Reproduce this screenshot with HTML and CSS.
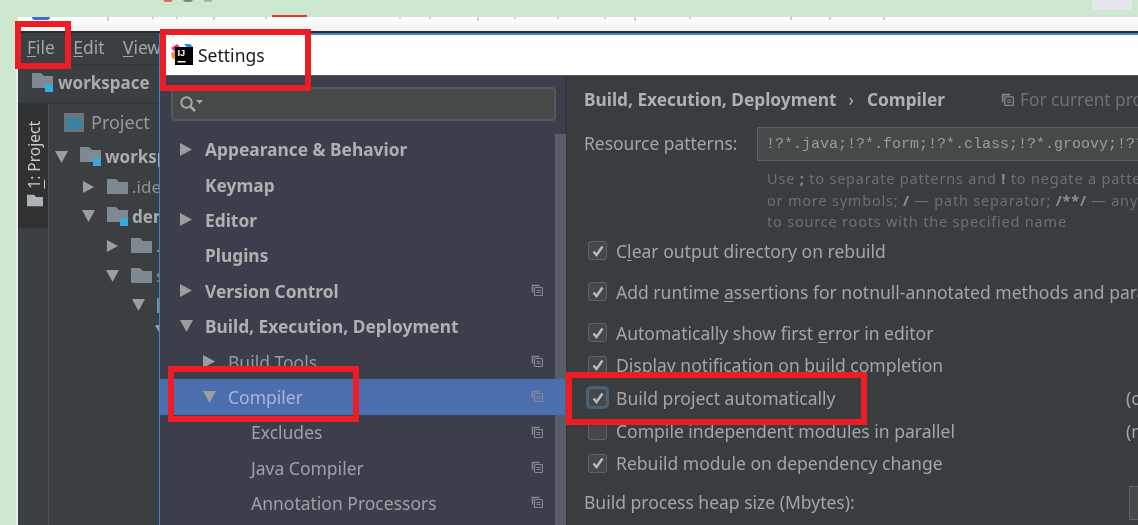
FILE: index.html
```html
<!DOCTYPE html>
<html lang="en">
<head>
<meta charset="utf-8">
<title>Settings</title>
<link rel="stylesheet" href="styles.css">
</head>
<body>
<svg width="0" height="0" class="defs">
  <defs>
    <symbol id="folder" viewBox="0 0 21 15"><path d="M0 0h9l3 3h9v12H0z" fill="#7d8a94"/></symbol>
    <symbol id="tri-r" viewBox="0 0 12 13"><path d="M0 0l12 6.500L0 13z" fill="#9b9d9f"/></symbol>
    <symbol id="tri-d" viewBox="0 0 13 12"><path d="M0 0h13L6.500 12z" fill="#9b9d9f"/></symbol>
    <symbol id="copy" viewBox="0 0 12 12"><path d="M1.500 8.500V1.500h7" fill="none" stroke="#85888a" stroke-width="1.500"/><rect x="3.500" y="3.500" width="8" height="8" rx="1" fill="none" stroke="#85888a" stroke-width="1.200"/><path d="M5.500 6.500h4M5.500 8.500h4" stroke="#85888a"/></symbol>
    <symbol id="check" viewBox="0 0 12 12"><path d="M1.500 6.500l3 3.500 6-8.500" fill="none" stroke="#b9bbbd" stroke-width="2.400"/></symbol>
  </defs>
</svg>
<div class="page">
  <div class="top-green">
    <svg class="top-bits" viewBox="0 0 60 3"><path d="M0 0h10l-2 2H2z" fill="#d9695f"/><path d="M20 0h10l-2 2h-6z" fill="#7d8580"/><path d="M40 0h10l-2 2h-6z" fill="#a9b5aa"/></svg>
    <span class="top-btn"></span>
  </div>
  <div class="browser-strip">
    <svg class="strip-ticks" viewBox="0 0 1120 4"><path d="M90 0v4M135 0v2M159 0v2M196 0v3M248 0v2M382 0v2M412 0v2M460 0v4M497 0v2M540 0v2M587 0v2M617 0v4M672 0v2M773 0v3M812 0v3M866 0v3" stroke="#9a9ea6" stroke-width="1"/></svg>
    <span class="strip-logo"></span>
    <span class="strip-red"></span>
  </div>
  <div class="ide">
    <div class="menubar">
      <span class="menu"><u>F</u>ile</span>
      <span class="menu"><u>E</u>dit</span>
      <span class="menu"><u>V</u>iew</span>
    </div>
    <div class="navbar">
      <span class="module-folder"><svg class="fold"><use href="#folder"/></svg><i class="module-dot"></i></span>
      <b>workspace</b>
    </div>
    <div class="ide-body">
      <div class="toolstrip">
        <div class="tool-tab">
          <span class="tool-label"><u>1</u>: Project</span>
          <svg class="tool-folder"><use href="#folder"/></svg>
        </div>
      </div>
      <div class="project">
        <div class="project-head">
          <span class="project-icon"></span>
          <span>Project</span>
        </div>
        <div class="tree">
          <div class="tree-row d0"><svg class="tri"><use href="#tri-d"/></svg><span class="module-folder"><svg class="fold"><use href="#folder"/></svg><i class="module-dot"></i></span><b>worksp</b></div>
          <div class="tree-row d1"><svg class="tri"><use href="#tri-r"/></svg><svg class="fold"><use href="#folder"/></svg><span>.idea</span></div>
          <div class="tree-row d1"><svg class="tri"><use href="#tri-d"/></svg><span class="module-folder"><svg class="fold"><use href="#folder"/></svg><i class="module-dot"></i></span><b>demo</b></div>
          <div class="tree-row d2"><svg class="tri"><use href="#tri-r"/></svg><svg class="fold"><use href="#folder"/></svg><span>.mvn</span></div>
          <div class="tree-row d2"><svg class="tri"><use href="#tri-d"/></svg><svg class="fold"><use href="#folder"/></svg><span>src</span></div>
          <div class="tree-row d3"><svg class="tri"><use href="#tri-d"/></svg><svg class="fold"><use href="#folder"/></svg></div>
          <div class="tree-row d4"><svg class="tri"><use href="#tri-d"/></svg></div>
        </div>
      </div>
    </div>
  </div>

  <section class="dialog">
    <header class="dialog-title">
      <svg class="ij-logo" viewBox="0 0 22 22">
        <path d="M0 4L6 0l3 3-4 6z" fill="#f0347c"/>
        <path d="M0 9l5-2v9l-4-2z" fill="#f7931e"/>
        <path d="M13 0h6l3 3v7z" fill="#1f8ceb"/>
        <rect x="4" y="3" width="18" height="18" fill="#000"/>
        <text x="6.500" y="12" class="ij-text">IJ</text>
        <rect x="6.500" y="17" width="8" height="1.500" fill="#fff"/>
      </svg>
      <span>Settings</span>
    </header>
    <div class="dialog-body">
      <aside class="sidebar">
        <div class="search">
          <svg class="search-icon" viewBox="0 0 24 18"><circle cx="7.500" cy="7.500" r="5.200" fill="none" stroke="#a4a6a8" stroke-width="2"/><path d="M11.500 11.500l4.500 4.500" stroke="#a4a6a8" stroke-width="2.500"/><path d="M17 5h7l-3.500 4z" fill="#a4a6a8"/></svg>
        </div>
        <div class="scrollbar"></div>
        <ul class="nav">
          <li class="nav-row top"><svg class="tri"><use href="#tri-r"/></svg><span>Appearance &amp; Behavior</span></li>
          <li class="nav-row top no-tri"><span>Keymap</span></li>
          <li class="nav-row top"><svg class="tri"><use href="#tri-r"/></svg><span>Editor</span></li>
          <li class="nav-row top no-tri"><span>Plugins</span></li>
          <li class="nav-row top"><svg class="tri"><use href="#tri-r"/></svg><span>Version Control</span><svg class="copy"><use href="#copy"/></svg></li>
          <li class="nav-row top"><svg class="tri"><use href="#tri-d"/></svg><span>Build, Execution, Deployment</span></li>
          <li class="nav-row sub"><svg class="tri"><use href="#tri-r"/></svg><span>Build Tools</span><svg class="copy"><use href="#copy"/></svg></li>
          <li class="nav-row sub selected"><svg class="tri"><use href="#tri-d"/></svg><span>Compiler</span><svg class="copy"><use href="#copy"/></svg></li>
          <li class="nav-row leaf"><span>Excludes</span><svg class="copy"><use href="#copy"/></svg></li>
          <li class="nav-row leaf"><span>Java Compiler</span><svg class="copy"><use href="#copy"/></svg></li>
          <li class="nav-row leaf"><span>Annotation Processors</span><svg class="copy"><use href="#copy"/></svg></li>
        </ul>
      </aside>
      <main class="content">
        <div class="crumbs">
          <b>Build, Execution, Deployment</b>
          <span class="crumb-sep">›</span>
          <b>Compiler</b>
          <span class="scope"><svg class="copy"><use href="#copy"/></svg>For current project</span>
        </div>
        <div class="field-row">
          <label class="field-label">Resource patterns:</label>
          <div class="pattern-input">!?*.java;!?*.form;!?*.class;!?*.groovy;!?*.scala;!?*.flex</div>
        </div>
        <p class="hint">Use <b>;</b> to separate patterns and <b>!</b> to negate a pattern. Accepted wildcards: <b>?</b><br>or more symbols; <b>/</b> — path separator; <b>/**/</b> — any number of directories<br>to source roots with the specified name</p>
        <div class="checks">
          <div class="check spaced"><span class="box on"><svg><use href="#check"/></svg></span><span>C<u>l</u>ear output directory on rebuild</span></div>
          <div class="check spaced"><span class="box on"><svg><use href="#check"/></svg></span><span>Add runtime <u>a</u>ssertions for notnull-annotated methods and parameters</span></div>
          <div class="check"><span class="box on"><svg><use href="#check"/></svg></span><span>Automatically show first <u>e</u>rror in editor</span></div>
          <div class="check"><span class="box on"><svg><use href="#check"/></svg></span><span>Display notification on build completion</span></div>
          <div class="check"><span class="box on focus"><svg><use href="#check"/></svg></span><span>Build project automatically</span><span class="side-note">(only works while not running)</span></div>
          <div class="check"><span class="box"></span><span>Compile independent modules in parallel</span><span class="side-note">(may require larger heap)</span></div>
          <div class="check"><span class="box on"><svg><use href="#check"/></svg></span><span>Rebuild module on dependency change</span></div>
        </div>
        <div class="heap-row">
          <label>Build process heap size (Mbytes):</label>
          <div class="heap-input"></div>
        </div>
      </main>
    </div>
  </section>

  <div class="mark mark-file"></div>
  <div class="mark mark-settings"></div>
  <div class="mark mark-compiler"></div>
  <div class="mark mark-build"></div>
</div>
</body>
</html>
```
FILE: styles.css
```css
* { box-sizing: border-box; }
html, body { margin: 0; height: 100%; overflow: hidden; }
body { background: #cde8d0; font-family: "Noto Sans", "Open Sans", sans-serif; font-size: 17.400px; color: #a9abad; }
.defs { position: absolute; }
u { text-underline-offset: 2px; text-decoration-thickness: 1px; }
svg { display: block; flex: none; }

.page { position: relative; width: 1138px; height: 525px; display: flex; flex-direction: column; overflow: hidden; filter: blur(0.35px); }

.top-green { height: 17px; flex: none; display: flex; justify-content: space-between; padding: 0 6px 0 163px; }
.top-bits { width: 60px; height: 3px; }
.top-btn { width: 40px; height: 10px; background: #e6e6ee; border-radius: 0 0 4px 4px; }

.browser-strip { height: 14px; flex: none; margin-left: 18px; background: linear-gradient(#ffffff, #f2f2f2); display: flex; align-items: flex-start; position: relative; }
.strip-ticks { position: absolute; left: 0; top: 0; width: 1120px; height: 4px; }
.strip-logo { width: 18px; height: 3px; margin-left: 14px; background: #3c6fc4; border-radius: 0 0 6px 6px; }
.strip-red { width: 35px; height: 2px; margin-top: -2px; margin-left: 222px; background: #e0362c; }

.ide { flex: 1; margin-left: 18px; background: #3c3f41; display: flex; flex-direction: column; border-top: 2px solid #2b2b2b; min-height: 0; box-shadow: -2px 0 0 #eceeec; }
.menubar { height: 31px; flex: none; display: flex; gap: 18.500px; padding: 0 0 3px 9px; align-items: center; color: #a3a6a8; }
.navbar { height: 40px; flex: none; border-top: 1px solid #333537; border-bottom: 1px solid #333537; display: flex; align-items: center; gap: 5px; padding: 0 0 3px 14px; color: #a9abad; font-size: 17px; }
.module-folder { position: relative; display: block; flex: none; width: 21px; height: 19px; }
.fold { width: 21px; height: 15px; }
.module-dot { position: absolute; right: 0; bottom: 0; width: 8px; height: 8px; background: #3aa8dc; }

.ide-body { flex: 1; display: flex; min-height: 0; }
.toolstrip { width: 31px; flex: none; border-right: 1px solid #4a4c4e; }
.tool-tab { height: 124px; background: #2f3132; display: flex; flex-direction: column; align-items: center; padding: 17px 0 0 3px; gap: 5px; }
.tool-label { writing-mode: vertical-rl; transform: rotate(180deg); font-size: 15.500px; line-height: 17px; color: #c9cbcd; white-space: nowrap; }
.tool-folder { width: 16px; height: 13px; filter: brightness(1.3) saturate(0.2); }

.project { flex: 1; min-width: 0; }
.project-head { display: flex; align-items: center; gap: 7px; height: 36px; padding: 0 0 0 15px; margin-bottom: 2px; color: #96999b; font-size: 18px; }
.project-icon { width: 20px; height: 19px; border: 2px solid #6f7376; border-top-width: 4px; background: #3f7f9f; }
.tree { font-size: 17px; }
.tree-row { height: 29.700px; display: flex; align-items: center; white-space: nowrap; color: #8f9294; gap: 4px; }
.tree-row .tri { width: 13px; height: 12px; margin-right: 8px; }
.tree-row b { color: #a9abad; }
.tree-row.d0 { padding-left: 6px; }
.tree-row.d1 { padding-left: 33px; }
.tree-row.d2 { padding-left: 57px; }
.tree-row.d3 { padding-left: 83px; }
.tree-row.d4 { padding-left: 106px; height: 22px; }

.dialog { position: absolute; left: 159px; top: 33px; right: 0; bottom: 0; display: flex; flex-direction: column; border-top: 2px solid #3b86c9; border-left: 1px solid #3b86c9; background: #3a3d40; }
.dialog-title { height: 41px; flex: none; background: #fff; color: #1a1a1a; display: flex; align-items: center; gap: 5px; padding-left: 11px; font-size: 17.500px; border-bottom: 1px solid #55585b; }
.ij-logo { width: 22px; height: 22px; }
.ij-text { font-family: "Liberation Sans", sans-serif; font-size: 9px; font-weight: bold; fill: #fff; }
.dialog-body { flex: 1; display: flex; min-height: 0; }

.sidebar { width: 407px; flex: none; background: #3c3f4b; position: relative; padding: 11px 11px 0; border-right: 2px solid #333537; }
.search { height: 34px; margin-bottom: 10.500px; width: 385px; background: #45494a; border: 2px solid #55585a; border-radius: 4px; display: flex; align-items: center; padding-left: 6px; }
.search-icon { width: 24px; height: 18px; }
.scrollbar { position: absolute; left: 395px; top: 58px; width: 11px; bottom: 0; background: #5a5c66; }
.nav { list-style: none; margin: 0 -11px; padding: 0; position: relative; }
.nav-row { height: 35.400px; display: flex; align-items: center; position: relative; white-space: nowrap; }
.nav-row .tri { width: 12px; height: 13px; margin-right: 13px; }
.nav-row .tri:has(use[href="#tri-d"]) { width: 13px; height: 12px; margin-right: 12px; }
.nav-row.top { padding-left: 20px; font-weight: 700; color: #aeb0b2; font-size: 17.350px; }
.nav-row.no-tri { padding-left: 45px; }
.nav-row.sub { padding-left: 43px; color: #96999c; font-size: 17.500px; }
.nav-row.leaf { padding-left: 91px; color: #9ea1a3; font-size: 17.500px; }
.nav-row.selected { background: #4b6eaf; color: #a9b7d4; }
.nav-row .copy { position: absolute; left: 371px; top: 11px; width: 12px; height: 12px; }

.content { flex: 1; min-width: 0; padding: 11px 0 0 17px; white-space: nowrap; overflow: hidden; }
.crumbs { display: flex; align-items: center; height: 24px; color: #afb1b3; font-size: 17.300px; }
.crumb-sep { margin: 0 13px 0 12px; }
.scope { display: flex; align-items: center; gap: 6px; margin-left: 56px; color: #6f7274; }
.scope .copy { width: 13px; height: 13px; }
.field-row { display: flex; align-items: center; margin-top: 16px; height: 34px; }
.field-label { width: 173px; flex: none; color: #a3a6a8; padding-bottom: 3px; }
.pattern-input { flex: 1; min-width: 0; height: 34px; background: #45494a; border: 1px solid #5f6264; border-right: 0; padding-left: 8px; font-family: "Liberation Mono", monospace; font-size: 15px; line-height: 33px; color: #9a9c9e; overflow: hidden; }
.hint { margin: 7px 0 0 183px; font-size: 14.500px; line-height: 21.500px; letter-spacing: 0.8px; color: #6d7072; height: 65px; }
.hint b { color: #8a8d8f; }
.checks { display: flex; flex-direction: column; margin-top: 2px; font-size: 17.550px; }
.check { height: 32.600px; display: flex; align-items: center; gap: 9px; padding: 0 0 1px 4px; color: #a3a6a8; position: relative; }
.check.spaced { margin-bottom: 8.400px; }
.box { width: 19px; height: 19px; flex: none; border: 1px solid #5f6264; border-radius: 3px; background: #45484a; display: flex; align-items: center; justify-content: center; }
.box svg { width: 12px; height: 12px; }
.box.focus { background: #44484b; box-shadow: 0 0 0 2px #3a6188; }
.side-note { position: absolute; left: 542px; }
.heap-row { display: flex; align-items: center; height: 34px; margin-top: 6px; color: #a3a6a8; position: relative; padding-bottom: 2px; font-size: 17.500px; }
.heap-input { position: absolute; left: 545px; top: 0; width: 60px; height: 34px; background: #45494a; border: 1px solid #5f6264; }

.mark { position: absolute; border: 6px solid #ee1c25; pointer-events: none; }
.mark-file { left: 15px; top: 21px; width: 56px; height: 48px; }
.mark-settings { left: 160px; top: 29px; width: 151px; height: 62px; }
.mark-compiler { left: 168px; top: 366px; width: 191px; height: 56px; }
.mark-build { left: 566px; top: 372px; width: 301px; height: 53px; }
```
